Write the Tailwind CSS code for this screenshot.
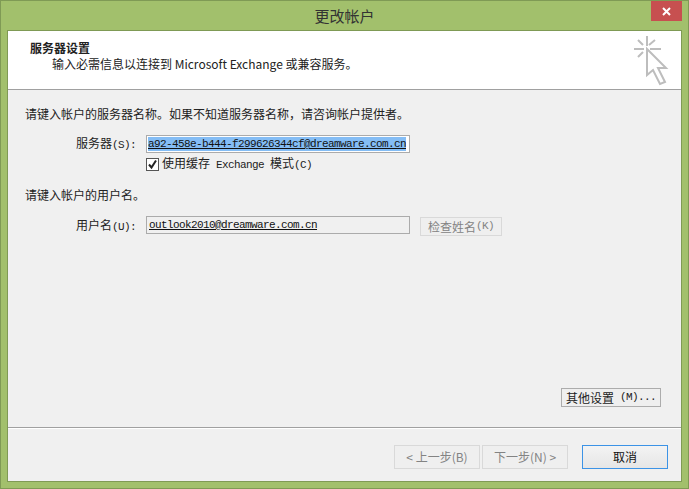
<!DOCTYPE html>
<html lang="zh-CN">
<head>
    <meta charset="UTF-8">
    <title>更改帐户</title>
    <script src="https://cdn.jsdelivr.net/npm/@tailwindcss/browser@4"></script>
</head>
<body class="overflow-hidden bg-[#a2c06c]">
<div class="relative w-[689px] h-[489px] border border-[#7f9a55] bg-[#a2c06c] flex flex-col font-['Noto_Sans_CJK_SC',sans-serif] text-[12px] text-[#111]">

    <!-- Title bar -->
    <div class="h-[29px] shrink-0 flex items-center justify-center text-[15px] text-[#333] pt-[1px]">更改帐户</div>
    <button class="absolute top-0 left-[650px] w-[31px] h-[20px] bg-[#c75050] flex items-center justify-center">
        <svg width="9" height="9" viewBox="0 0 9 9"><path d="M1 1L8 8M8 1L1 8" stroke="#fff" stroke-width="2"/></svg>
    </button>

    <!-- Dialog body -->
    <div class="ml-[6px] mr-[6px] mb-[6px] flex-1 border border-[#7f9a55] bg-[#f0f0f0] flex flex-col">

        <!-- Header -->
        <div class="relative h-[59px] shrink-0 bg-white border-b border-[#a0a0a0] pl-[22px] pt-[9px]">
            <div class="font-bold leading-[16px] text-[#222]">服务器设置</div>
            <div class="pl-[22px] leading-[16px] text-[#222]">输入必需信息以连接到 Microsoft Exchange 或兼容服务。</div>
            <svg class="absolute left-[625px] top-[3px]" width="36" height="52" viewBox="0 0 36 52" fill="none" stroke="#bdbdbd" stroke-width="2">
                <path d="M14 2V12M1 15H11M17 15H28M5 6L10 11M22 6L16 11M5 23L10 18"/>
                <path d="M14 15V41L20 36L27 50L32 48L25 34H33Z"/>
            </svg>
        </div>

        <!-- Form -->
        <div class="flex-1 flex flex-col pl-[17px]">
            <p class="mt-[16px] leading-[16px] text-[#222]">请键入帐户的服务器名称。如果不知道服务器名称，请咨询帐户提供者。</p>

            <div class="mt-[13px] flex items-center h-[18px]">
                <label class="w-[121px] pl-[51px] whitespace-nowrap text-[#222]">服务器<span class="font-['Liberation_Mono',monospace] text-[11px] tracking-[-0.6px]">(S):</span></label>
                <div class="w-[264px] h-[18px] bg-white border border-[#ababab] flex items-center pl-[1px] overflow-hidden">
                    <span class="bg-[#84bdf5] h-[14px] leading-[14px] w-[258px] underline whitespace-nowrap overflow-hidden font-['Liberation_Mono',monospace] text-[11px] tracking-[-0.6px] text-[#111]">a92-458e-b444-f299626344cf@dreamware.com.cn</span>
                </div>
            </div>

            <div class="mt-[3px] ml-[121px] flex items-center h-[16px]">
                <span class="w-[13px] h-[13px] bg-white border border-[#555] flex items-center justify-center">
                    <svg width="11" height="11" viewBox="0 0 11 11" fill="none"><path d="M2 5.5L4.5 8.5L9 1.5" stroke="#222" stroke-width="2"/></svg>
                </span>
                <span class="ml-[3px] whitespace-pre text-[#222]">使用缓存<span class="font-['Liberation_Mono',monospace] text-[11px] tracking-[-0.6px]"> Exchange </span>模式<span class="font-['Liberation_Mono',monospace] text-[11px] tracking-[-0.6px]">(C)</span></span>
            </div>

            <p class="mt-[15px] leading-[16px] text-[#222]">请键入帐户的用户名。</p>

            <div class="mt-[13px] flex items-start h-[19px]">
                <label class="w-[121px] pl-[51px] h-[18px] leading-[18px] whitespace-nowrap text-[#222]">用户名<span class="font-['Liberation_Mono',monospace] text-[11px] tracking-[-0.6px]">(U):</span></label>
                <div class="w-[264px] h-[18px] bg-[#f0f0f0] border border-[#ababab] flex items-center pl-[2px]">
                    <span class="underline whitespace-nowrap font-['Liberation_Mono',monospace] text-[11px] tracking-[-0.6px] text-[#111]">outlook2010@dreamware.com.cn</span>
                </div>
                <button class="ml-[10px] mt-[1px] w-[82px] h-[19px] border border-[#d9d9d9] bg-[#efefef] text-[#838383] flex items-center justify-center whitespace-nowrap">检查姓名<span class="font-['Liberation_Mono',monospace] text-[11px] tracking-[-0.6px]">(K)</span></button>
            </div>

            <div class="mt-auto mb-[20px] mr-[20px] flex justify-end">
                <button class="w-[100px] h-[19px] border border-[#acacac] bg-[#efefef] flex items-center justify-center whitespace-pre text-[#222]">其他设置<span class="font-['Liberation_Mono',monospace] text-[11px] tracking-[-0.6px]"> (M)...</span></button>
            </div>
        </div>

        <!-- Footer -->
        <div class="h-[54px] shrink-0 border-t border-[#a0a0a0]">
            <div class="h-px bg-white"></div>
            <div class="flex pl-[386px] pt-[16px]">
                <button class="w-[86px] h-[24px] border border-[#d9d9d9] bg-[#efefef] text-[#838383]">&lt; 上一步(B)</button>
                <button class="ml-[2px] w-[86px] h-[24px] border border-[#d9d9d9] bg-[#efefef] text-[#838383]">下一步(N) &gt;</button>
                <button class="ml-[14px] w-[86px] h-[24px] border border-[#3c93e6] bg-gradient-to-b from-[#f3f3f3] to-[#e6e6e6] text-[#111]">取消</button>
            </div>
        </div>
    </div>
</div>
</body>
</html>
